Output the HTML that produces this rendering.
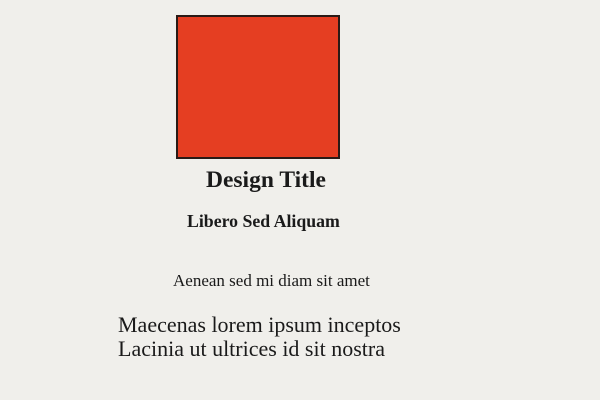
<!DOCTYPE html>
<html><head><style>
html,body{margin:0;padding:0;}
body{width:600px;height:400px;background:#f0efeb;position:relative;overflow:hidden;font-family:"Liberation Serif",serif;color:#1a1a1a;}
.box{position:absolute;left:176px;top:15px;width:160px;height:140px;background:#e53e22;border:2px solid #2a1a16;}
.t{position:absolute;white-space:nowrap;line-height:1;}
</style></head><body>
<div class="box"></div>
<div class="t" style="left:206px;top:169px;font-size:23.5px;font-weight:bold;">Design Title</div>
<div class="t" style="left:187px;top:213px;font-size:17.8px;font-weight:bold;">Libero Sed Aliquam</div>
<div class="t" style="left:173px;top:272px;font-size:17px;">Aenean sed mi diam sit amet</div>
<div class="t" style="left:118px;top:313px;font-size:22px;line-height:24px;">Maecenas lorem ipsum inceptos<br>Lacinia ut ultrices id sit nostra</div>
</body></html>
